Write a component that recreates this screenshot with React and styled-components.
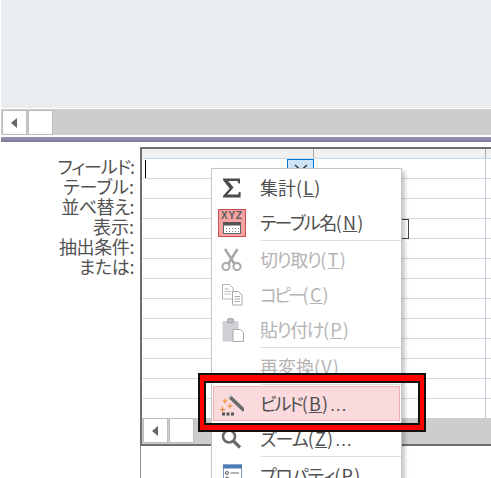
import React from "react";
import styled, { createGlobalStyle } from "styled-components";

const Global = createGlobalStyle`
  html, body { margin: 0; padding: 0; background: #fff; }
  #root { height: 478px; overflow: hidden; }
  * { box-sizing: border-box; }
`;

const Page = styled.div`
  position: relative;
  width: 491px;
  height: 478px;
  overflow: hidden;
  padding-left: 1px;
  font-family: "Noto Sans CJK JP", "Noto Sans", sans-serif;
  background: #fff;
`;
const TablePane = styled.div`
  height: 108px;
  background: #e9edf0;
`;
const ScrollBar = styled.div`
  display: flex;
  gap: 1px;
  height: 26px;
  padding: ${p => (p.$inset ? "0 0 0 1px" : "1px 0 0 1px")};
  background: #cdcdcd;
`;
const TopScroll = styled(ScrollBar)`
  margin-top: 1px;
`;
const ScrollButton = styled.div`
  display: flex;
  align-items: center;
  padding-left: 8px;
  width: 25px;
  height: 25px;
  background: #fff;
  border: 1px solid #bcbcbc;
`;
const LeftArrow = styled.span`
  width: 0;
  height: 0;
  border-style: solid;
  border-width: 5.5px 6px 5.5px 0;
  border-color: transparent #666 transparent transparent;
`;
const Splitter = styled.div`
  height: 5px;
  margin-top: 2px;
  background: linear-gradient(#9694b0, #7f7d9c);
`;
const Designer = styled.div`
  display: flex;
  padding-top: 5px;
`;
const Labels = styled.div`
  width: 139px;
  padding: 9px 6px 0 0;
  text-align: right;
  font-size: 18px;
  line-height: 20px;
  color: #525252;
  font-feature-settings: "palt";
`;
const Label = styled.div`
  letter-spacing: ${p => p.$track}px;
`;
const GridColumn = styled.div`
  flex: 1;
  min-width: 0;
  height: 340px;
  border-left: 1px solid #8d8d9e;
`;
const Frame = styled.div`
  margin-left: -1px;
  border: 2px solid #6e6e6e;
  border-right: none;
  overflow: hidden;
`;
const Columns = styled.div`
  display: grid;
  grid-template-columns: 172px 172px 1fr;
`;
const HeaderRow = styled(Columns)`
  height: 10px;
  background: #f0f0f0;
  border-bottom: 1px solid #c9dbe8;
`;
const HeaderCell = styled.div`
  border-right: 1px solid #a9a9a9;
  &:last-child { border-right: none; }
`;
const Rows = styled.div`
  height: 259px;
  overflow: hidden;
`;
const Row = styled(Columns)`
  height: 20px;
  border-bottom: 1px solid #d2d8df;
`;
const Cell = styled.div`
  display: flex;
  align-items: flex-start;
  justify-content: ${p => (p.$center ? "center" : "space-between")};
  border-right: 1px solid #c6ced8;
  &:last-child { border-right: none; }
`;
const Caret = styled.span`
  width: 1px;
  height: 18px;
  margin: 1px 0 0 3px;
  background: #000;
`;
const DropButton = styled.div`
  display: flex;
  justify-content: center;
  padding-top: 4px;
  width: 27px;
  height: 20px;
  margin-right: -1px;
  background: #cce4f7;
  border: 1px solid #0078d7;
  border-bottom: none;
`;
const CheckBox = styled.span`
  width: 18px;
  height: 20px;
  border: 1px solid #444;
  background: #fff;
`;
const GridScroll = styled(ScrollBar)`
  margin: 0;
`;

const Menu = styled.div`
  position: absolute;
  left: 211px;
  top: 168px;
  width: 191px;
  height: 330px;
  padding-top: 1px;
  background: #fff;
  border: 1px solid #c6c6c6;
  box-shadow: 3px 3px 4px rgba(0, 0, 0, 0.22);
`;
const MenuRow = styled.div`
  display: flex;
  align-items: center;
  height: 35px;
  margin: 0 1px;
  border: 1px solid ${p => (p.$active ? "#f3aeb2" : "transparent")};
  background: ${p => (p.$active ? "#fadadc" : "transparent")};
  color: ${p => (p.$disabled ? "#b4b4b4" : "#505050")};
  font-size: 18px;
  font-feature-settings: "palt";
  white-space: nowrap;
`;
const IconCell = styled.span`
  display: flex;
  align-items: center;
  justify-content: center;
  flex: none;
  width: 36px;
  height: 33px;
  margin-right: 10px;
`;
const ItemText = styled.span`
  margin-top: -2px;
`;
const ItemName = styled.span`
  letter-spacing: ${p => p.$track}px;
`;
const Accel = styled.span`
  letter-spacing: 1.2px;
`;
const Dots = styled.span`
  font-family: "Liberation Sans", sans-serif;
`;
const MenuSeparator = styled.div`
  height: 2px;
  margin-left: 49px;
  border-top: 1px solid #dcdcdc;
`;
const XyzBadge = styled.span`
  display: flex;
  flex-direction: column;
  align-items: center;
  width: 28px;
  height: 28px;
  background: #f7a3a3;
  border: 1px solid #c9504f;
  font-family: "Liberation Sans", sans-serif;
  font-size: 10px;
  font-weight: 700;
  line-height: 12px;
  letter-spacing: 0.8px;
  color: #5c5c5c;
`;
const Highlight = styled.div`
  position: absolute;
  left: 200px;
  top: 375px;
  width: 224px;
  height: 55px;
  border-style: solid;
  border-color: #f00;
  border-width: 6px 4px 5px;
  box-shadow: 0 0 0 2px #111, inset 0 0 0 2px #111;
`;

const Icon = ({ children }) => (
  <svg width="24" height="24" viewBox="0 0 24 24" fill="none">{children}</svg>
);
const Sigma = () => (
  <Icon>
    <path d="M3 2.5H20V7.5H18.6L17.6 5H8.2L13.6 11.5L7.4 18.6H18L19 16H20.6V21.5H3V20L9.6 12.4L3 4Z" fill="#4b4b4b" />
  </Icon>
);
const Calendar = () => (
  <svg width="18" height="12" viewBox="0 0 18 12">
    <rect x="0.5" y="0.5" width="17" height="11" fill="#fff" stroke="#666" />
    <rect x="0" y="0" width="18" height="3.5" fill="#555" />
    {[6, 9].map(y => [3, 6, 9, 12, 15].map(x => (
      <rect key={`${x}-${y}`} x={x} y={y} width="1" height="1" fill="#777" />
    )))}
  </svg>
);
const Scissors = () => (
  <Icon>
    <path d="M5 1L14.2 15.5M17.5 1L8.5 15.5" stroke="#a9a9a9" strokeWidth="2.6" />
    <circle cx="6" cy="18.5" r="3.6" fill="#fff" stroke="#a9a9a9" strokeWidth="2" />
    <circle cx="17" cy="18.5" r="3.6" fill="#fff" stroke="#a9a9a9" strokeWidth="2" />
  </Icon>
);
const Copy = () => (
  <Icon>
    <path d="M2.5 1.5H9.5L13 5V16H2.5Z" fill="#fff" stroke="#b4b4b4" />
    <path d="M4.5 6H9M4.5 8.5H11M4.5 11H11" stroke="#bbb" />
    <path d="M12.5 8.5H18.5L22 12V22H12.5Z" fill="#fff" stroke="#a9a9a9" />
    <path d="M14.5 13.5H20M14.5 16H20M14.5 18.5H20" stroke="#aaa" />
  </Icon>
);
const Paste = () => (
  <Icon>
    <rect x="2.5" y="3" width="16" height="20.5" rx="1" fill="#d3d0d5" />
    <rect x="7.5" y="0.8" width="6" height="4" rx="1" fill="#c6c3c8" stroke="#9a9a9a" />
    <path d="M13 11.5H20.5L23.5 14.5V23.5H13Z" fill="#fff" stroke="#a9a9a9" />
  </Icon>
);
const Wand = () => (
  <Icon>
    <path d="M10 5L23 17.5" stroke="#6a6a6a" strokeWidth="3.6" strokeLinecap="round" />
    <path d="M8 3L10.2 5.2" stroke="#ddd" strokeWidth="3.6" />
    <path d="M5 6.5V11.5M2.5 9H7.5M10 11.5V16.5M7.5 14H12.5M2.5 15V20M0 17.5H5" stroke="#ee8a2e" strokeWidth="1.1" />
    <rect x="2" y="20.5" width="3" height="3" fill="#555" />
    <rect x="6.5" y="20.5" width="3" height="3" fill="#555" />
    <rect x="11" y="20.5" width="3" height="3" fill="#555" />
  </Icon>
);
const Magnifier = () => (
  <Icon>
    <circle cx="9" cy="9.5" r="6" stroke="#6a6a6a" strokeWidth="2.6" />
    <path d="M13.5 14L20 20.5" stroke="#6a6a6a" strokeWidth="3.2" />
  </Icon>
);
const Properties = () => (
  <Icon>
    <rect x="3.5" y="1" width="18" height="22" fill="#fff" stroke="#7d9ac0" />
    <rect x="3" y="0.5" width="19" height="4" fill="#4c7bb5" />
    <circle cx="7" cy="9" r="1.5" stroke="#555" />
    <circle cx="7" cy="14.5" r="1.5" stroke="#555" />
    <path d="M10.5 9H19M10.5 14.5H19" stroke="#666" />
  </Icon>
);
const Xyz = () => (
  <XyzBadge>
    XYZ
    <Calendar />
  </XyzBadge>
);

const labels = [
  { text: "フィールド:", track: -1 },
  { text: "テーブル:", track: 0 },
  { text: "並べ替え:", track: -0.6 },
  { text: "表示:", track: 0 },
  { text: "抽出条件:", track: -0.4 },
  { text: "または:", track: -0.4 },
];
const menu = [
  { icon: Sigma, text: "集計", key: "L", track: 0 },
  { icon: Xyz, text: "テーブル名", key: "N", track: -1.6, sep: true },
  { icon: Scissors, text: "切り取り", key: "T", track: -1.4, disabled: true },
  { icon: Copy, text: "コピー", key: "C", track: -3, disabled: true },
  { icon: Paste, text: "貼り付け", key: "P", track: -1.4, disabled: true, sep: true },
  { text: "再変換", key: "V", track: 0, disabled: true, sep: true },
  { icon: Wand, text: "ビルド", key: "B", track: -2, tail: "…", active: true },
  { icon: Magnifier, text: "ズーム", key: "Z", track: -1, tail: "…", sep: true },
  { icon: Properties, text: "プロパティ", key: "P", track: -1.2 },
];

export default function App() {
  return (
    <Page>
      <Global />
      <TablePane />
      <TopScroll>
        <ScrollButton><LeftArrow /></ScrollButton>
        <ScrollButton />
      </TopScroll>
      <Splitter />
      <Designer>
        <Labels>
          {labels.map(l => <Label key={l.text} $track={l.track}>{l.text}</Label>)}
        </Labels>
        <GridColumn>
          <Frame>
            <HeaderRow>
              <HeaderCell /><HeaderCell /><HeaderCell />
            </HeaderRow>
            <Rows>
              {Array.from({ length: 13 }, (_, i) => (
                <Row key={i}>
                  <Cell>
                    {i === 0 && <Caret />}
                    {i === 0 && (
                      <DropButton>
                        <svg width="14" height="8" viewBox="0 0 14 8" fill="none">
                          <path d="M1 1L7 6.5L13 1" stroke="#333" strokeWidth="1.5" />
                        </svg>
                      </DropButton>
                    )}
                  </Cell>
                  <Cell $center>{i === 3 && <CheckBox />}</Cell>
                  <Cell />
                </Row>
              ))}
            </Rows>
            <GridScroll $inset>
              <ScrollButton><LeftArrow /></ScrollButton>
              <ScrollButton />
            </GridScroll>
          </Frame>
        </GridColumn>
      </Designer>
      <Menu>
        {menu.map(({ icon: I, text, key, track, tail, disabled, active, sep }) => (
          <React.Fragment key={text}>
            <MenuRow $disabled={disabled} $active={active}>
              <IconCell>{I && <I />}</IconCell>
              <ItemText>
                <ItemName $track={track}>{text}</ItemName>
                <Accel>(<u>{key}</u>)</Accel>
                {tail && <Dots>{tail}</Dots>}
              </ItemText>
            </MenuRow>
            {sep && <MenuSeparator />}
          </React.Fragment>
        ))}
      </Menu>
      <Highlight />
    </Page>
  );
}
